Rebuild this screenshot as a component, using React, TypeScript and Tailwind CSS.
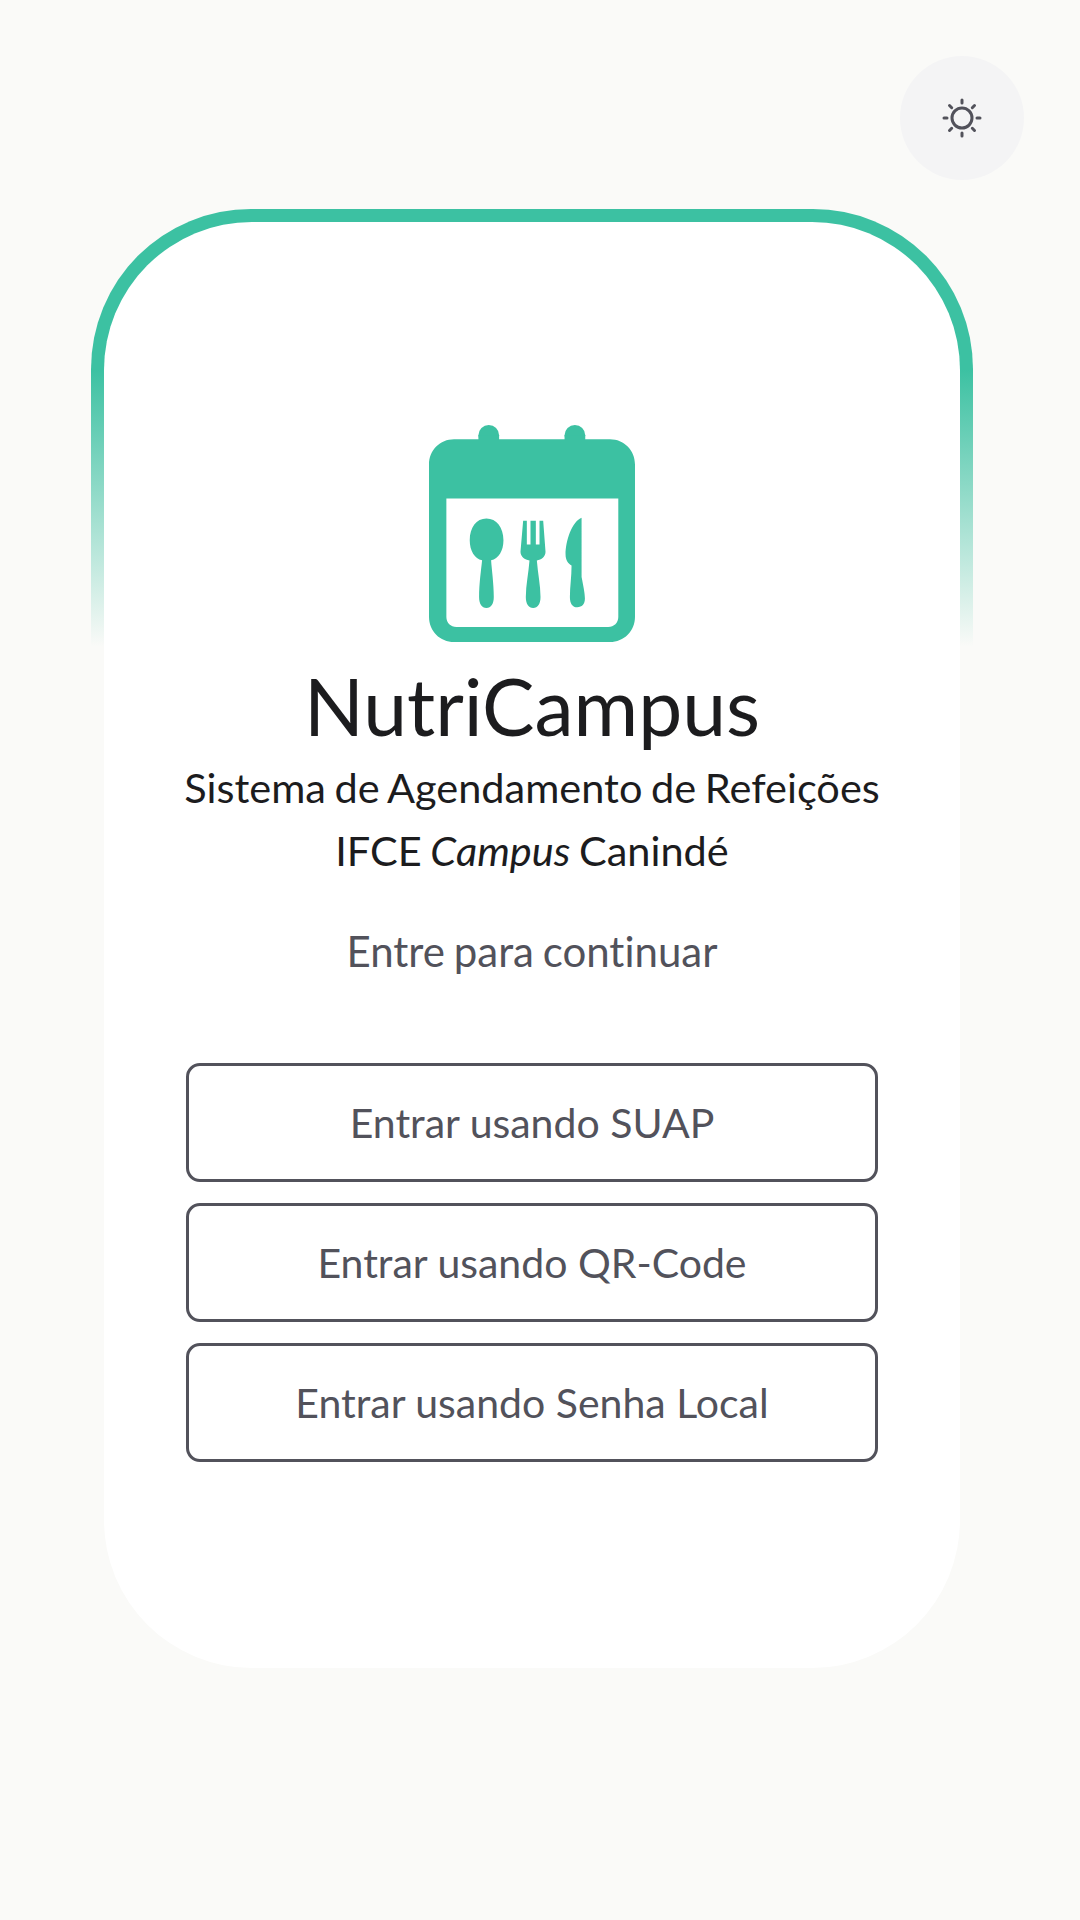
import React from 'react';

const LOGIN_OPTIONS = ['Entrar usando SUAP', 'Entrar usando QR-Code', 'Entrar usando Senha Local'];

function SunIcon() {
  return (
    <svg width="44" height="44" viewBox="0 0 44 44" fill="none" stroke="#52525b" strokeWidth="3" strokeLinecap="round">
      <circle cx="22" cy="22" r="10" />
      <path d="M22 4v3M22 37v3M4 22h3M37 22h3M9.5 9.5l2.2 2.2M32.3 32.3l2.2 2.2M9.5 34.5l2.2-2.2M32.3 11.7l2.2-2.2" />
    </svg>
  );
}

// calendar with spoon, fork and knife
function Logo() {
  return (
    <svg width="206" height="217" viewBox="88 45 617 650" fill="#3cc1a2">
      <circle cx="267" cy="76" r="31" />
      <circle cx="525" cy="76" r="31" />
      <rect x="236" y="76" width="62" height="30" />
      <rect x="494" y="76" width="62" height="30" />
      <path
        fillRule="evenodd"
        d="M163 88H630C672 88 705 121 705 163V620C705 662 672 695 630 695H163C121 695 88 662 88 620V163C88 121 121 88 163 88ZM140 265V620C140 637 153 650 170 650H625C642 650 655 637 655 620V265Z"
      />
      <path d="M260 325C290 325 311 352 311 390C311 422 296 445 274 450C276 480 282 520 282 560C282 580 274 593 260 593C246 593 238 580 238 560C238 520 244 480 247 450C225 445 210 422 210 390C210 352 230 325 260 325Z" />
      <path d="M370 332H381V403H392V332H408V403H419V332H430L437 425C437 440 425 449 411 451C414 490 422 525 422 560C422 580 414 593 400 593C386 593 378 580 378 560C378 525 386 490 389 451C375 449 362 440 362 425Z" />
      <path d="M545 323V500C550 525 555 550 555 565C555 582 546 591 532 591C518 591 510 580 510 560C510 530 515 500 515 466C505 460 497 450 497 432C497 395 515 335 545 323Z" />
    </svg>
  );
}

export default function App() {
  return (
    <div className="min-h-[1920px] bg-[#fafaf8] font-['Lato',sans-serif] [font-variant-ligatures:none] flex flex-col">
      <div className="flex justify-end pt-[56px] pr-[56px]">
        <button className="w-[124px] h-[124px] rounded-full bg-[#f4f4f5] flex items-center justify-center">
          <SunIcon />
        </button>
      </div>

      <div className="mt-[29px] ml-[91px] mr-[107px] rounded-[160px] pt-[13px] px-[13px] bg-gradient-to-b from-[#3cc1a2] from-[11%] to-transparent to-[30%]">
        <div className="h-[1446px] rounded-[148px] bg-white flex flex-col items-center pt-[203px]">
          <Logo />
          <h1 className="mt-[16px] text-[78.6px] leading-[96px] text-[#1c1c1e]">NutriCampus</h1>
          <p className="mt-[2px] text-[41.5px] leading-[63px] text-[#1c1c1e] text-center [word-spacing:-2px]">
            Sistema de Agendamento de Refeições
            <br />
            IFCE <em>Campus</em> Canindé
          </p>
          <p className="mt-[38px] text-[42px] leading-[63px] text-[#52525b] [word-spacing:-2px]">Entre para continuar</p>

          <div className="mt-[80px] w-[692px] flex flex-col gap-[21px]">
            {LOGIN_OPTIONS.map((label) => (
              <button
                key={label}
                className="h-[119px] rounded-[14px] border-[3px] border-[#52525b] text-[41px] text-[#52525b]"
              >
                {label}
              </button>
            ))}
          </div>
        </div>
      </div>
    </div>
  );
}
